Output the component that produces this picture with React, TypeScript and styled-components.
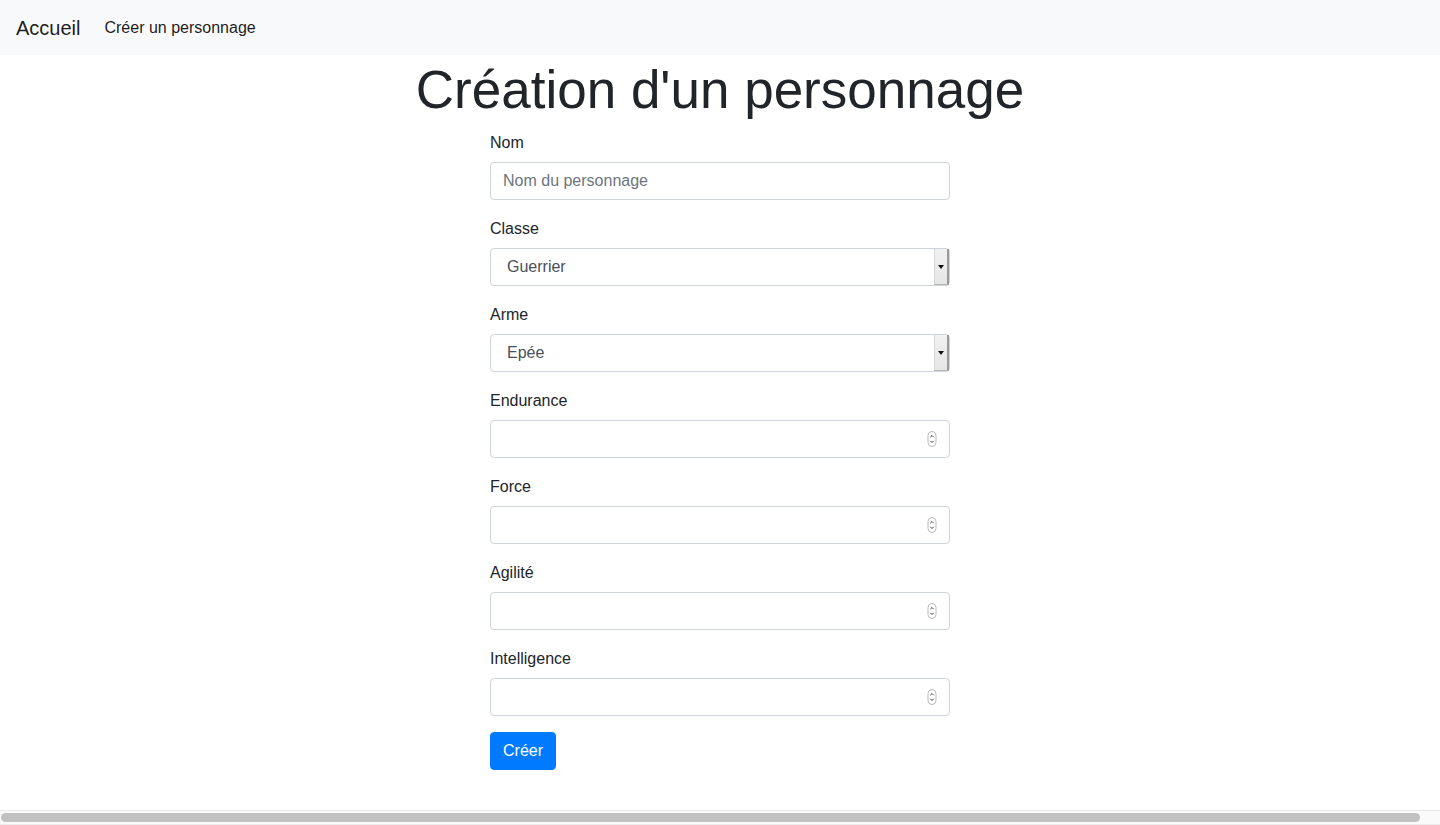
import React from "react";
import styled, { createGlobalStyle } from "styled-components";

const GlobalStyle = createGlobalStyle`
  html, body { margin: 0; padding: 0; }
  body {
    font-family: "Liberation Sans", Arial, sans-serif;
    font-size: 16px;
    line-height: 1.5;
    color: #212529;
    background: #fff;
    overflow: hidden;
  }
  * { box-sizing: border-box; }
`;

const Page = styled.div`
  height: 825px;
  display: flex;
  flex-direction: column;
`;

const Navbar = styled.nav`
  height: 55px;
  background: #f8f9fa;
  display: flex;
  align-items: center;
  padding: 0 16px;
`;

const Brand = styled.a`
  font-size: 20px;
  line-height: 30px;
  color: rgba(0, 0, 0, 0.9);
  text-decoration: none;
  margin-right: 16px;
`;

const NavLink = styled.a`
  font-size: 16px;
  line-height: 24px;
  padding: 0 8px;
  color: rgba(0, 0, 0, 0.9);
  text-decoration: none;
`;

const Main = styled.main`
  flex: 1;
  display: flex;
  flex-direction: column;
  align-items: center;
`;

const Title = styled.h1`
  margin: 0 0 8px;
  font-size: 53px;
  font-weight: 300;
  line-height: 69px;
  height: 67px;
  text-align: center;
  color: #212529;
`;

const Form = styled.form`
  width: 460px;
  display: flex;
  flex-direction: column;
  align-items: flex-start;
`;

const Group = styled.div`
  width: 100%;
  margin-bottom: 16px;
  display: flex;
  flex-direction: column;
`;

const Label = styled.label`
  display: block;
  padding-top: 1px;
  margin-bottom: 7px;
  font-size: 16px;
  line-height: 24px;
`;

const Field = styled.div`
  position: relative;
  width: 100%;
`;

const Input = styled.input`
  width: 100%;
  height: 38px;
  padding: 6px 12px;
  font: inherit;
  font-size: 16px;
  color: #495057;
  background: #fff;
  border: 1px solid #ced4da;
  border-radius: 4px;
  outline: none;
  -moz-appearance: textfield;
  &::placeholder { color: #6c757d; }
  &::-webkit-inner-spin-button,
  &::-webkit-outer-spin-button { -webkit-appearance: none; margin: 0; }
`;

const Select = styled.select`
  width: 100%;
  height: 38px;
  padding: 6px 16px;
  font: inherit;
  font-size: 16px;
  color: #495057;
  background: #fff;
  border: 1px solid #ced4da;
  border-radius: 4px;
  outline: none;
  appearance: none;
  -webkit-appearance: none;
`;

const SelectArrow = styled.span`
  position: absolute;
  top: 1px;
  bottom: 1px;
  right: 1px;
  width: 15px;
  background: linear-gradient(#f1f1f1, #e6e6e6);
  border-left: 1px solid #d6d6d6;
  border-right: 2px solid #9a9a9a;
  border-bottom: 1px solid #b5b5b5;
  display: flex;
  align-items: center;
  justify-content: center;
  pointer-events: none;
  &::after {
    content: "";
    border-left: 3px solid transparent;
    border-right: 3px solid transparent;
    border-top: 4px solid #111;
  }
`;

const Spinner = styled.svg`
  position: absolute;
  right: 13px;
  top: 11px;
  pointer-events: none;
`;

const Button = styled.button`
  height: 38px;
  padding: 6px 12px;
  font: inherit;
  font-size: 16px;
  line-height: 24px;
  color: #fff;
  background: #007bff;
  border: 1px solid #007bff;
  border-radius: 4px;
  cursor: pointer;
`;

const ScrollTrack = styled.div`
  height: 15px;
  background: #fafafa;
  border-top: 1px solid #e8e8e8;
  border-bottom: 1px solid #ececec;
  padding: 2px 20px 2px 1px;
  display: flex;
  align-items: center;
`;

const ScrollThumb = styled.div`
  flex: 1;
  height: 9px;
  background: #c1c1c1;
  border-radius: 5px;
`;

const SpinIcon = () => (
  <Spinner width="10" height="16" viewBox="0 0 10 16">
    <rect x="1" y="0.5" width="8" height="15" rx="4" fill="#fff" stroke="#b9b9b9" strokeWidth="1" />
    <path d="M3.3 6.2 L5 4.5 L6.7 6.2" fill="none" stroke="#444" strokeWidth="1" />
    <path d="M3.3 9.8 L5 11.5 L6.7 9.8" fill="none" stroke="#444" strokeWidth="1" />
  </Spinner>
);

const stats = ["Endurance", "Force", "Agilité", "Intelligence"];

export default function App() {
  return (
    <>
      <GlobalStyle />
      <Page>
        <Navbar>
          <Brand href="#">Accueil</Brand>
          <NavLink href="#">Créer un personnage</NavLink>
        </Navbar>
        <Main>
          <Title>Création d'un personnage</Title>
          <Form onSubmit={(e) => e.preventDefault()}>
            <Group>
              <Label htmlFor="nom">Nom</Label>
              <Field>
                <Input id="nom" type="text" placeholder="Nom du personnage" />
              </Field>
            </Group>
            <Group>
              <Label htmlFor="classe">Classe</Label>
              <Field>
                <Select id="classe" defaultValue="Guerrier">
                  <option>Guerrier</option>
                  <option>Mage</option>
                  <option>Voleur</option>
                </Select>
                <SelectArrow />
              </Field>
            </Group>
            <Group>
              <Label htmlFor="arme">Arme</Label>
              <Field>
                <Select id="arme" defaultValue="Epée">
                  <option>Epée</option>
                  <option>Hache</option>
                  <option>Arc</option>
                </Select>
                <SelectArrow />
              </Field>
            </Group>
            {stats.map((s) => (
              <Group key={s}>
                <Label htmlFor={s}>{s}</Label>
                <Field>
                  <Input id={s} type="number" />
                  <SpinIcon />
                </Field>
              </Group>
            ))}
            <Button type="submit">Créer</Button>
          </Form>
        </Main>
        <ScrollTrack>
          <ScrollThumb />
        </ScrollTrack>
      </Page>
    </>
  );
}
